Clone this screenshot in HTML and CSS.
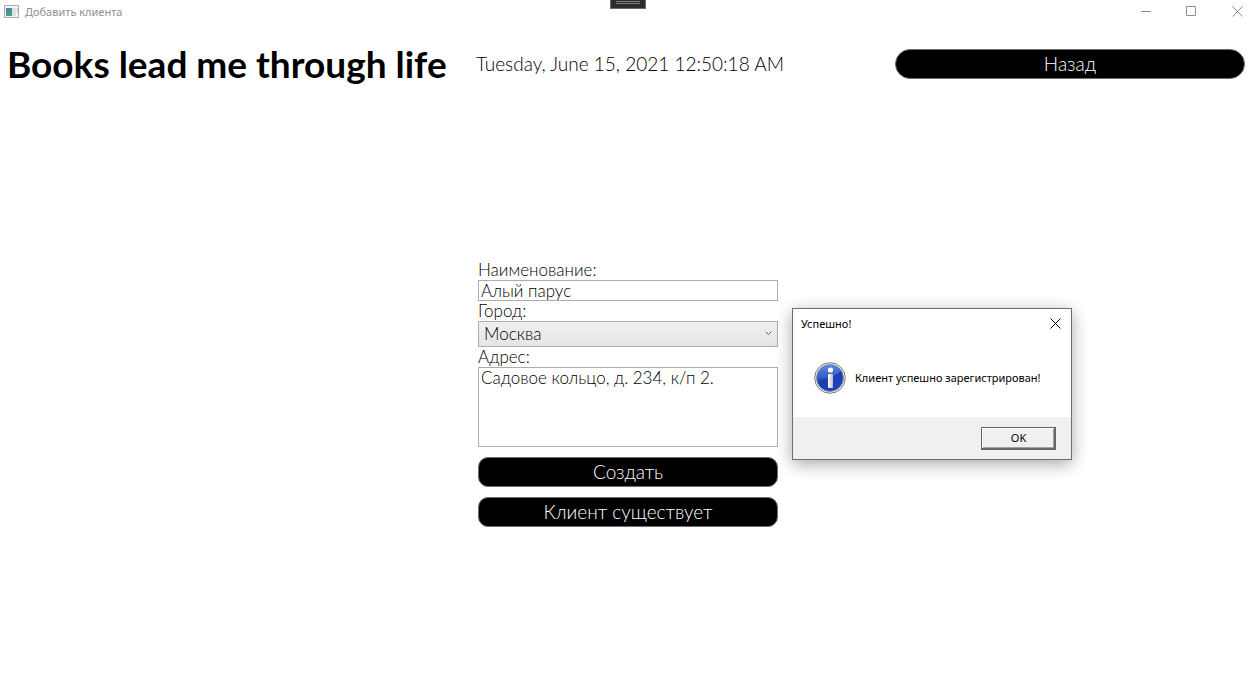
FILE: index.html
```html
<!DOCTYPE html>
<html lang="ru">
<head>
<meta charset="utf-8">
<title>Добавить клиента</title>
<link rel="stylesheet" href="styles.css">
</head>
<body>
<div class="window">
  <div class="titlebar">
    <svg class="app-icon" width="16" height="14" viewBox="0 0 16 14" aria-hidden="true">
      <defs>
        <linearGradient id="pane" x1="0" y1="0" x2="0.5" y2="1"><stop offset="0" stop-color="#4a7fae"/><stop offset="1" stop-color="#4fa27c"/></linearGradient>
      </defs>
      <rect x="0.5" y="0.5" width="14" height="12" fill="#f4f5f7" stroke="#a9adb3"/>
      <rect x="2" y="3" width="6" height="8" fill="url(#pane)"/>
      <rect x="8" y="3" width="4" height="8" fill="#dde1e6"/>
      <rect x="13" y="3" width="1" height="5" fill="#b5cfc4"/>
    </svg>
    <span class="window-title">Добавить клиента</span>
    <div class="window-controls">
      <button class="control" type="button" aria-label="Свернуть"><svg width="11" height="11" viewBox="0 0 11 11"><path d="M0 5.500h10"/></svg></button>
      <button class="control" type="button" aria-label="Развернуть"><svg width="11" height="11" viewBox="0 0 11 11"><path d="M.5.5h9v9h-9z"/></svg></button>
      <button class="control" type="button" aria-label="Закрыть"><svg width="11" height="11" viewBox="0 0 11 11"><path d="M.5.5l10 10M10.500.5l-10 10"/></svg></button>
    </div>
  </div>
  <div class="debug-tab"></div>
  <header class="header">
    <h1 class="slogan">Books lead me through life</h1>
    <time class="clock" datetime="2021-06-15T00:50:18">Tuesday, June 15, 2021 12:50:18 AM</time>
    <button class="button button-back" type="button">Назад</button>
  </header>
  <main class="content">
    <form class="client-form">
      <label class="label" for="name">Наименование:</label>
      <input class="field" id="name" type="text" value="Алый парус">
      <label class="label" for="city">Город:</label>
      <div class="select-box">
        <select class="select" id="city"><option>Москва</option></select>
        <svg class="chevron" width="7" height="5" viewBox="0 0 7 5" aria-hidden="true"><path d="M.7.7l2.800 2.800 2.800-2.800"/></svg>
      </div>
      <label class="label" for="address">Адрес:</label>
      <textarea class="field area" id="address">Садовое кольцо, д. 234, к/п 2.</textarea>
      <div class="actions">
        <button class="button" type="button">Создать</button>
        <button class="button" type="button">Клиент существует</button>
      </div>
    </form>
  </main>
  <section class="dialog" role="dialog" aria-labelledby="dialog-title">
    <div class="dialog-bar">
      <span id="dialog-title">Успешно!</span>
      <button class="dialog-close" type="button" aria-label="Закрыть"><svg width="11" height="11" viewBox="0 0 11 11"><path d="M.5.5l10 10M10.500.5l-10 10"/></svg></button>
    </div>
    <div class="dialog-body">
      <svg class="info" width="32" height="32" viewBox="0 0 32 32" aria-hidden="true">
        <defs>
          <linearGradient id="ball" x1="0.2" y1="0" x2="0.7" y2="1"><stop offset="0" stop-color="#3c6ed8"/><stop offset="0.5" stop-color="#1b3fae"/><stop offset="1" stop-color="#2340cc"/></linearGradient>
          <linearGradient id="gloss" x1="0" y1="0" x2="0" y2="1"><stop offset="0" stop-color="#6f98ee"/><stop offset="1" stop-color="#3059c6"/></linearGradient>
          <linearGradient id="stem" x1="0" y1="0" x2="1" y2="0"><stop offset="0" stop-color="#ffffff"/><stop offset="1" stop-color="#bdbdbd"/></linearGradient>
        </defs>
        <circle cx="16" cy="16" r="15.300" fill="#f4f4f4" stroke="#777"/>
        <circle cx="16" cy="16" r="13.500" fill="url(#ball)" stroke="#8d939e"/>
        <path d="M3 16A13 13 0 0 1 27 9Q22 15 3 18z" fill="url(#gloss)" opacity="0.700"/>
        <circle cx="16.500" cy="8" r="2.600" fill="#fff"/>
        <rect x="14" y="12" width="5" height="14" rx="1" fill="url(#stem)"/>
      </svg>
      <p class="message">Клиент успешно зарегистрирован!</p>
    </div>
    <div class="dialog-footer">
      <button class="ok" type="button">OK</button>
    </div>
  </section>
</div>
</body>
</html>
```

FILE: styles.css
```css
* {
  box-sizing: border-box;
}

body {
  margin: 0;
  background: #fff;
  color: #000;
  font: 300 17px/20px "Century Gothic", Lato, sans-serif;
}

button,
input,
select,
textarea {
  margin: 0;
  font: inherit;
  color: inherit;
}

.window {
  position: relative;
  display: flex;
  flex-direction: column;
  min-height: 100vh;
}

.titlebar {
  display: flex;
  align-items: center;
  height: 23px;
  padding-left: 4px;
  gap: 5px;
  font: 11px/16px "Segoe UI", "Noto Sans", sans-serif;
  color: #8f8f8f;
}

.window-controls {
  display: flex;
  margin-left: auto;
}

.control {
  display: flex;
  align-items: center;
  justify-content: center;
  width: 45px;
  height: 23px;
  padding: 0;
  border: 0;
  background: none;
}

.control:last-child {
  width: 34px;
  padding-left: 12px;
}

.control svg,
.dialog-close svg,
.chevron {
  fill: none;
  stroke: #8f8f8f;
}

.debug-tab {
  position: absolute;
  top: 0;
  left: 50%;
  width: 36px;
  height: 9px;
  margin-left: -14px;
  border: 1px solid #6a6a6a;
  border-top: 0;
  background: linear-gradient(#7b7b7b, #7b7b7b) 5px 1px / 24px 1px no-repeat,
    linear-gradient(#7b7b7b, #7b7b7b) 5px 3px / 24px 1px no-repeat, #2d2d30;
}

.header {
  display: grid;
  grid-template-columns: 469px 1fr 350px;
  align-items: center;
  height: 82px;
  padding: 0 3px 0 7px;
}

.slogan {
  margin: 0;
  font-size: 37px;
  line-height: 40px;
  font-weight: 700;
  white-space: nowrap;
}

.clock {
  font-size: 19px;
  line-height: 24px;
  white-space: nowrap;
}

.button {
  width: 100%;
  height: 30px;
  padding: 0;
  border: 1px solid #707070;
  border-radius: 10px;
  background: #000;
  color: #fff;
  font-size: 19px;
  line-height: 24px;
}

.button-back {
  border-radius: 15px;
}

.content {
  display: flex;
  flex: 1;
  align-items: center;
  justify-content: center;
  padding-left: 8px;
}

.client-form {
  display: flex;
  flex-direction: column;
  width: 300px;
  padding-top: 4px;
}

.label {
  line-height: 20px;
}

.field {
  display: block;
  width: 100%;
  height: 21px;
  padding: 0 2px;
  border: 1px solid #abadb3;
  border-radius: 0;
  background: #fff;
  outline: 0;
}

.area {
  height: 80px;
  resize: none;
}

.select-box {
  display: grid;
  align-items: center;
}

.select,
.chevron {
  grid-area: 1 / 1;
}

.select {
  width: 100%;
  height: 26px;
  padding: 0 5px;
  border: 1px solid #acacac;
  border-radius: 0;
  background: linear-gradient(#f0f0f0, #e5e5e5);
  appearance: none;
}

.chevron {
  justify-self: end;
  margin-right: 6px;
  stroke: #606060;
  pointer-events: none;
}

.actions {
  display: grid;
  gap: 10px;
  margin-top: 10px;
}

.dialog {
  position: absolute;
  top: 308px;
  left: calc(50% + 168px);
  width: 280px;
  border: 1px solid #6e6e6e;
  background: #fff;
  box-shadow: 0 4px 16px rgba(0, 0, 0, 0.35);
  font: 11px/16px "Segoe UI", "Noto Sans", sans-serif;
}

.dialog-bar {
  display: flex;
  align-items: center;
  justify-content: space-between;
  height: 29px;
  padding: 0 10px 0 8px;
}

.dialog-close {
  display: flex;
  padding: 0;
  border: 0;
  background: none;
}

.dialog-close svg {
  stroke: #000;
}

.dialog-body {
  display: flex;
  align-items: center;
  gap: 9px;
  height: 79px;
  padding-left: 21px;
}

.message {
  margin: 0;
  white-space: nowrap;
}

.dialog-footer {
  display: flex;
  align-items: center;
  justify-content: flex-end;
  height: 42px;
  padding-right: 15px;
  background: #f0f0f0;
}

.ok {
  width: 75px;
  height: 23px;
  padding: 0;
  border: 1px solid #646464;
  border-radius: 0;
  background: #f0f0f0;
  box-shadow: inset -1px -1px #696969, inset 1px 1px #fff, inset -2px -2px #a0a0a0;
}
```
